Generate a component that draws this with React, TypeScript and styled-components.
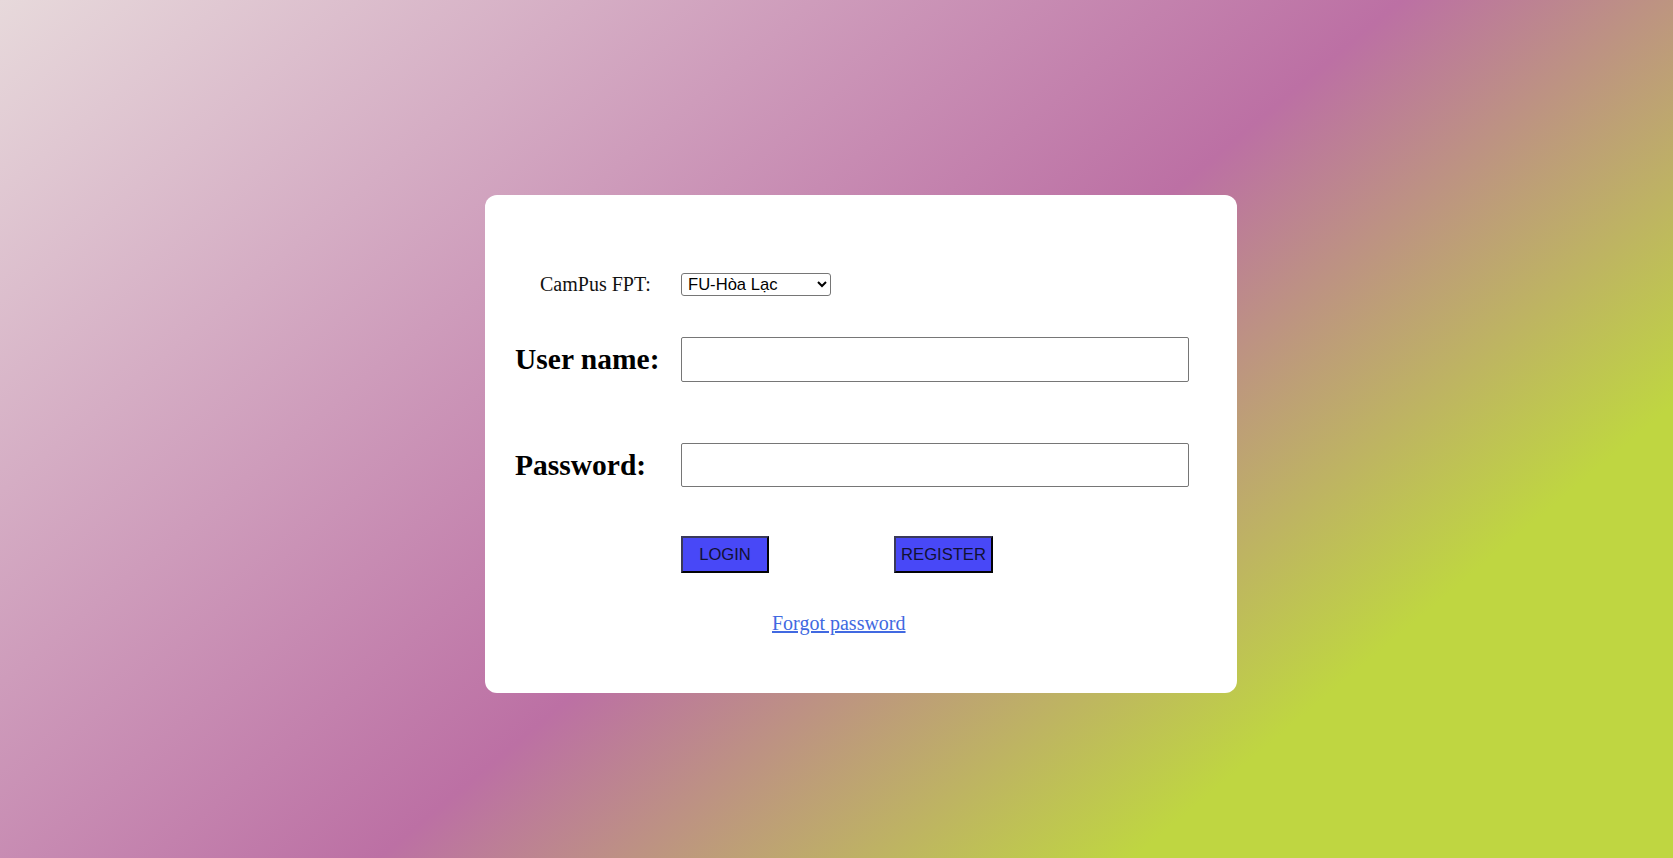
import React from 'react';
import styled, { createGlobalStyle } from 'styled-components';

const GlobalStyle = createGlobalStyle`
  html, body {
    margin: 0;
    padding: 0;
  }

  body {
    font-family: 'Liberation Serif', 'Times New Roman', serif;
  }
`;

const Page = styled.div`
  box-sizing: border-box;
  min-height: 100vh;
  padding: 195px 0 0 485px;
  background: linear-gradient(140deg, #e7d9db 0%, #bc70a4 52%, #bfd641 80%);
`;

const Card = styled.div`
  box-sizing: border-box;
  width: 752px;
  height: 498px;
  padding: 78px 30px 0;
  background: #ffffff;
  border-radius: 12px;
`;

const Row = styled.div<{ $top?: number }>`
  display: grid;
  grid-template-columns: 166px 508px;
  align-items: center;
  margin-top: ${({ $top }) => $top ?? 0}px;
`;

const SmallLabel = styled.label`
  padding-left: 25px;
  font-size: 20px;
  color: #111;
`;

const BigLabel = styled.label`
  font-size: 29.5px;
  font-weight: bold;
  color: #000;
`;

const CampusSelect = styled.select`
  box-sizing: border-box;
  width: 150px;
  height: 23px;
  padding: 0 2px;
  font-family: 'Liberation Sans', Arial, sans-serif;
  font-size: 16.6px;
  color: #000;
  background: #fff;
  border: 1px solid #767676;
  border-radius: 3px;
`;

const TextInput = styled.input<{ $height: number }>`
  box-sizing: border-box;
  width: 508px;
  height: ${({ $height }) => $height}px;
  border: 1px solid #767676;
  border-radius: 2px;
  background: #fff;
`;

const Actions = styled.div`
  display: flex;
  gap: 125px;
`;

const ActionButton = styled.button<{ $width: number }>`
  box-sizing: border-box;
  width: ${({ $width }) => $width}px;
  height: 37px;
  padding: 0;
  font-family: 'Liberation Sans', Arial, sans-serif;
  font-size: 16.6px;
  color: #111133;
  background: #4848f7;
  border: 2px outset #3a3a5a;
  cursor: pointer;
`;

const LinkRow = styled.div`
  margin-top: 39px;
  padding-left: 257px;
  line-height: 23px;
`;

const ForgotLink = styled.a`
  font-size: 20px;
  color: #4169e1;
  text-decoration: underline;
`;

export default function App (): React.ReactElement {
  return (
    <>
      <GlobalStyle />
      <Page>
        <Card>
          <Row>
            <SmallLabel>CamPus FPT:</SmallLabel>
            <CampusSelect defaultValue='hl'>
              <option value='hl'>FU-Hòa Lạc</option>
              <option value='hcm'>FU-Hồ Chí Minh</option>
              <option value='dn'>FU-Đà Nẵng</option>
            </CampusSelect>
          </Row>
          <Row $top={41}>
            <BigLabel>User name:</BigLabel>
            <TextInput $height={45} type='text' />
          </Row>
          <Row $top={61}>
            <BigLabel>Password:</BigLabel>
            <TextInput $height={44} type='password' />
          </Row>
          <Row $top={49}>
            <span />
            <Actions>
              <ActionButton $width={88}>LOGIN</ActionButton>
              <ActionButton $width={99}>REGISTER</ActionButton>
            </Actions>
          </Row>
          <LinkRow>
            <ForgotLink href='#'>Forgot password</ForgotLink>
          </LinkRow>
        </Card>
      </Page>
    </>
  );
}
